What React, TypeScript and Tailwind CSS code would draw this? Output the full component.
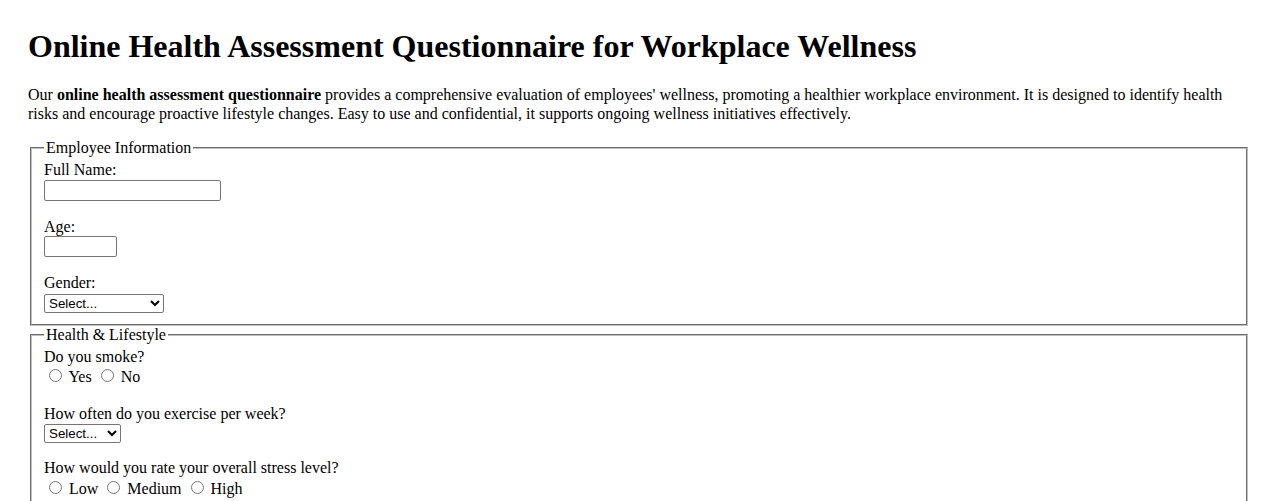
import React from "react";

const exerciseOptions = ["Select...", "Never", "1-2 times", "3-4 times", "5+ times"];
const genderOptions = ["Select...", "Male", "Female", "Non-binary", "Prefer not to say"];

const Radio = ({ name, label }: { name: string; label: string }) => (
	<label>
		<input type="radio" name={name} className="mt-[3px] mr-[3px] ml-[5px]" /> {label}{" "}
	</label>
);

const selectClass =
	"mt-[1px] block h-[19px] rounded-[2px] border border-[#767676] bg-white font-['Liberation_Sans',Arial,sans-serif] text-[13.33px] text-black";

const App = () => {
	return (
		<div className="min-h-screen bg-white px-[28px] pt-[28px] pb-10 font-['Liberation_Serif','Times_New_Roman',serif] text-[16px] leading-[18.4px] text-black">
			<h1 className="mb-[21.44px] text-[32px] leading-[36.8px] font-bold">
				Online Health Assessment Questionnaire for Workplace Wellness
			</h1>
			<p className="mb-4">
				Our <strong>online health assessment questionnaire</strong> provides a comprehensive
				evaluation of employees' wellness, promoting a healthier workplace environment. It is
				designed to identify health risks and encourage proactive lifestyle changes. Easy to use and
				confidential, it supports ongoing wellness initiatives effectively.
			</p>

			<form>
				<fieldset className="mx-[2px] border-2 border-[#c0c0c0] px-3 pt-[4px] pb-[11px] [border-style:groove]">
					<legend className="px-[2px]">Employee Information</legend>
					<label htmlFor="fullName" className="block">
						Full Name:
					</label>
					<input
						id="fullName"
						type="text"
						className="block h-[21px] w-[177px] rounded-[2px] border border-[#767676] bg-white"
					/>
					<div className="h-[17px]" />
					<label htmlFor="age" className="block">
						Age:
					</label>
					<input
						id="age"
						type="number"
						className="block h-[21px] w-[73px] rounded-[2px] border border-[#767676] bg-white"
					/>
					<div className="h-[17px]" />
					<label htmlFor="gender" className="block">
						Gender:
					</label>
					<select id="gender" className={`${selectClass} w-[120px]`}>
						{genderOptions.map((opt) => (
							<option key={opt}>{opt}</option>
						))}
					</select>
				</fieldset>

				<fieldset className="mx-[2px] border-2 border-[#c0c0c0] px-3 pt-[4px] pb-[11px] [border-style:groove]">
					<legend className="px-[2px]">Health &amp; Lifestyle</legend>
					<div>Do you smoke?</div>
					<div>
						<Radio name="smoke" label="Yes" />
						<Radio name="smoke" label="No" />
					</div>
					<div className="h-[18px]" />
					<label htmlFor="exercise" className="block">
						How often do you exercise per week?
					</label>
					<select id="exercise" className={`${selectClass} w-[77px]`}>
						{exerciseOptions.map((opt) => (
							<option key={opt}>{opt}</option>
						))}
					</select>
					<div className="h-[16px]" />
					<div>How would you rate your overall stress level?</div>
					<div>
						<Radio name="stress" label="Low" />
						<Radio name="stress" label="Medium" />
						<Radio name="stress" label="High" />
					</div>
					<div className="h-[18px]" />
					<label htmlFor="conditions" className="block">
						Any existing medical conditions?
					</label>
					<textarea
						id="conditions"
						rows={3}
						className="block w-[300px] rounded-[2px] border border-[#767676] bg-white"
					/>
				</fieldset>

				<button
					type="submit"
					className="mt-3 rounded-[2px] border border-[#767676] bg-[#efefef] px-[6px] py-[1px] font-['Liberation_Sans',Arial,sans-serif] text-[13.33px]"
				>
					Submit
				</button>
			</form>
		</div>
	);
};

export default App;
